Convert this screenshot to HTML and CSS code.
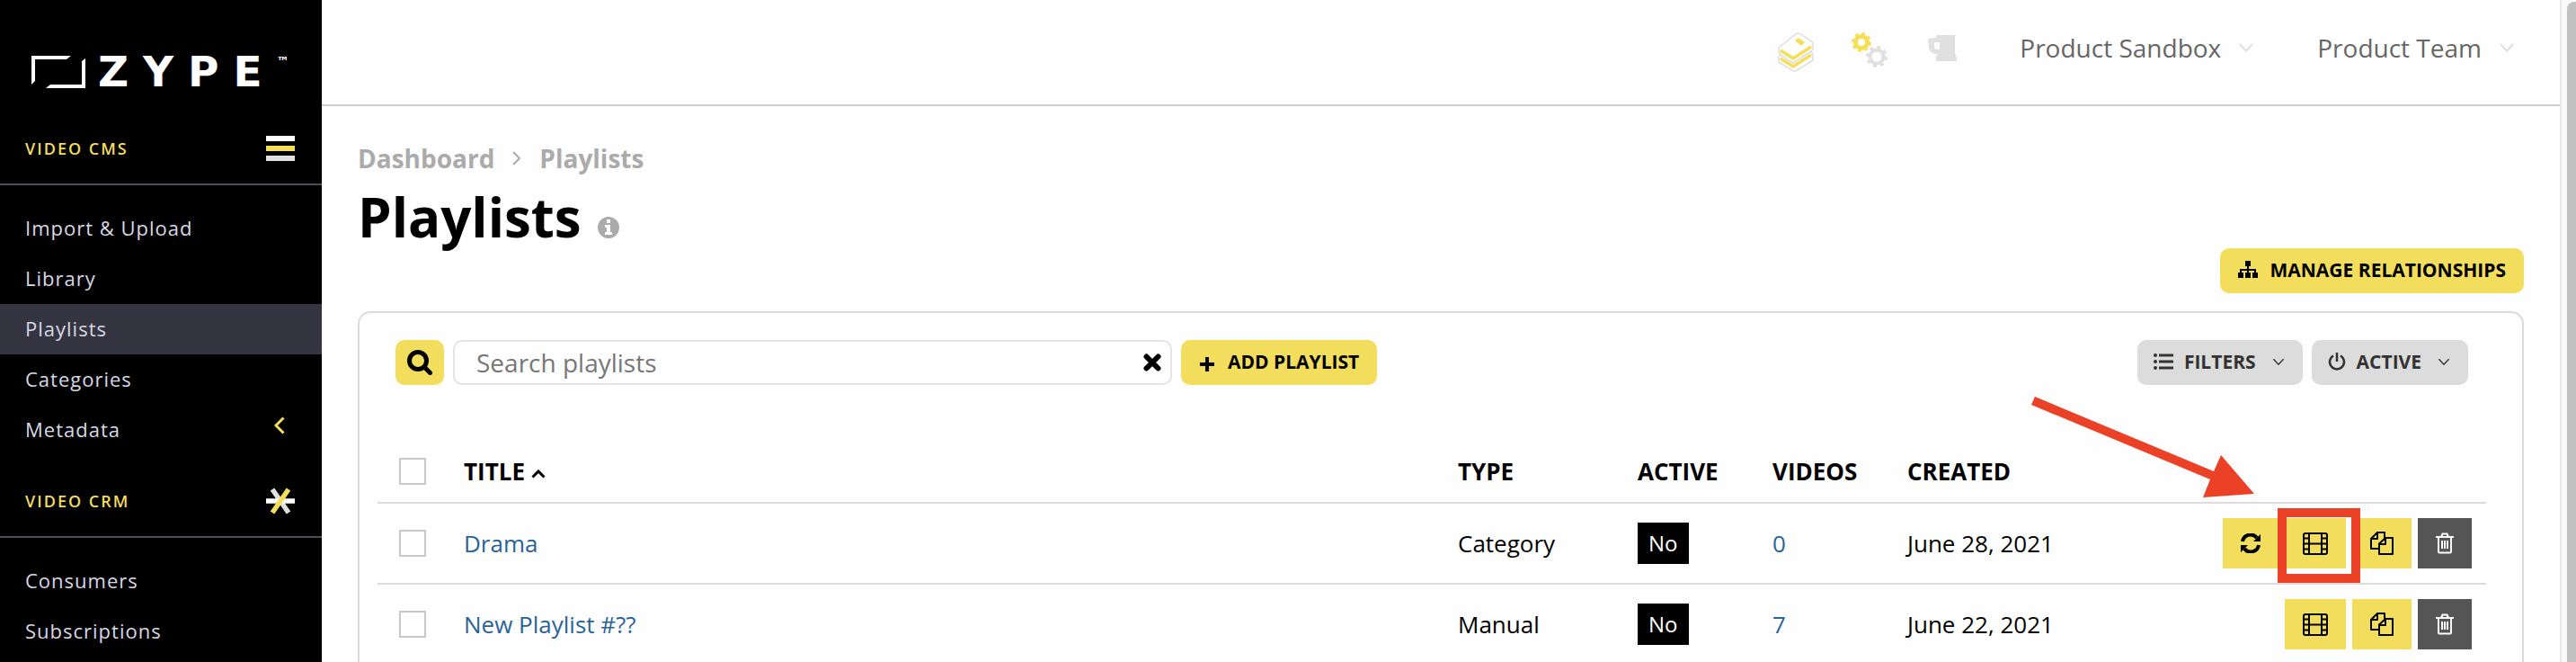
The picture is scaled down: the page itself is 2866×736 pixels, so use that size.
FILE: index.html
```html
<!DOCTYPE html>
<html lang="en">
<head>
    <meta charset="UTF-8">
    <meta name="viewport" content="width=device-width, initial-scale=1.0">
    <title>Playlists</title>
    <link rel="stylesheet" href="styles.css">
</head>
<body>
    <!-- Shared icons -->
    <svg class="sprite" aria-hidden="true">
        <symbol id="icon-down" viewBox="0 0 20 12"><path d="M2 1.500l8 8.500 8-8.500" fill="none" stroke="currentColor" stroke-width="2"/></symbol>
        <symbol id="icon-film" viewBox="0 0 28 26">
            <g fill="none" stroke="currentColor" stroke-width="2">
                <rect x="1" y="2" width="26" height="23" rx="2"/>
                <path d="M7 2v23M21 2v23M7 13.500h14M1 7.500h6M1 13.500h6M1 19.500h6M21 7.500h6M21 13.500h6M21 19.500h6"/>
            </g>
        </symbol>
        <symbol id="icon-copy" viewBox="0 0 26 26">
            <g fill="none" stroke="currentColor" stroke-width="2" stroke-linejoin="round">
                <path d="M10 19H1V8l7-7h8v6M8 1v7H1"/>
                <path d="M17 7h8v18H10V13.500zM17 7v7h-7"/>
            </g>
        </symbol>
        <symbol id="icon-trash" viewBox="0 0 20 24">
            <g fill="none" stroke="currentColor" stroke-width="2">
                <path d="M0 5h20M6 5l1.500-3.500h5L14 5M3 5v16q0 1.500 1.500 1.500h11q1.500 0 1.500-1.500V5M7 9v9M10 9v9M13 9v9"/>
            </g>
        </symbol>
    </svg>

    <div class="app">
        <nav class="sidebar">
            <a class="logo" href="#">
                <svg width="60" height="38" viewBox="0 0 60 38" fill="#fff">
                    <path d="M0 1h44l-5 4H4v24l-4 4z"/>
                    <path d="M60 4v33H16l5-4h35V7z"/>
                </svg>
                <span class="wordmark">ZYPE</span>
                <span class="tm">™</span>
            </a>
            <div class="section">
                <span>Video CMS</span>
                <svg width="32" height="28" viewBox="0 0 32 28"><path fill="#fff" d="M0 0h32v6H0z"/><path fill="#f3dd5d" d="M0 11h32v6H0z"/><path fill="#e0e0e0" d="M0 22h32v6H0z"/></svg>
            </div>
            <ul class="menu">
                <li><a href="#">Import &amp; Upload</a></li>
                <li><a href="#">Library</a></li>
                <li><a href="#" class="current">Playlists</a></li>
                <li><a href="#">Categories</a></li>
                <li><a href="#">Metadata <svg width="12" height="20" viewBox="0 0 12 20"><path d="M10.500 1.500L2 10l8.500 8.500" fill="none" stroke="#f3dd5d" stroke-width="3"/></svg></a></li>
            </ul>
            <div class="section">
                <span>Video CRM</span>
                <svg width="32" height="30" viewBox="0 0 32 30" stroke-width="5.500"><path stroke="#e0e0e0" d="M7 2l18 26"/><path stroke="#fff" d="M0 15h32"/><path stroke="#f3dd5d" d="M25 2L7 28"/></svg>
            </div>
            <ul class="menu">
                <li><a href="#">Consumers</a></li>
                <li><a href="#">Subscriptions</a></li>
            </ul>
        </nav>

        <div class="page">
            <header class="topbar">
                <div class="tools">
                    <a href="#" aria-label="Library">
                        <svg width="40" height="44" viewBox="0 0 40 44" fill="none">
                            <path d="M1 17L21 1h3l15 10v8l-2 2 2 3v7L20 43h-3L1 33v-6l2-2-2-3z" stroke="#dedede" stroke-width="1.500"/>
                            <path d="M3 25l14 9 20-13" stroke="#dedede" stroke-width="1.500"/>
                            <path d="M3 20l14 9 20-13M3 29l14 9 20-13" stroke="#f6de55" stroke-width="3.500"/>
                            <path d="M19 9l4-3 7 5-4 4z" fill="#f6de55"/>
                        </svg>
                    </a>
                    <a href="#" aria-label="Settings">
                        <svg width="43" height="40" viewBox="0 0 43 40" fill="none">
                            <g stroke="#f6de55"><circle cx="11" cy="11" r="6.500" stroke-width="5"/><circle cx="11" cy="11" r="9.500" stroke-width="3" stroke-dasharray="3.500 3.960"/></g>
                            <g stroke="#e0e0e0"><circle cx="28" cy="27" r="7.500" stroke-width="4"/><circle cx="28" cy="27" r="10.500" stroke-width="3" stroke-dasharray="4 4.250"/></g>
                        </svg>
                    </a>
                    <a href="#" aria-label="Blender">
                        <svg width="32" height="32" viewBox="0 -3 32 32" fill="#e0e0e0"><path fill-rule="evenodd" d="M9 0h22l-1 2v18l2 5v4H9v-4l2-4H9q-7-1-8-7L0 4q4-1 9-1zM7 8v6l2 2h4V8z"/></svg>
                    </a>
                </div>
                <button class="account">Product Sandbox <svg width="18" height="12"><use href="#icon-down"/></svg></button>
                <button class="account">Product Team <svg width="18" height="12"><use href="#icon-down"/></svg></button>
            </header>

            <main class="content">
                <div class="breadcrumb">
                    <a href="#">Dashboard</a>
                    <svg width="10" height="16" viewBox="0 0 10 16"><path d="M1 1l7 7-7 7" fill="none" stroke="#ababab" stroke-width="2"/></svg>
                    <a href="#">Playlists</a>
                </div>
                <div class="heading">
                    <h1>Playlists</h1>
                    <svg width="24" height="24" viewBox="0 0 24 24"><circle cx="12" cy="12" r="12" fill="#ababab"/><path fill="#fff" d="M10 3h4v4h-4zM8 9h6v8h2v3H8v-3h2v-5H8z"/></svg>
                </div>
                <div class="page-actions">
                    <button class="btn">
                        <svg width="22" height="20" viewBox="0 0 22 20"><path d="M8 0h6v6H8zM0 13h6v6H0zM8 13h6v6H8zM16 13h6v6h-6z"/><path d="M11 5v9M3 14v-4h16v4" fill="none" stroke="#000" stroke-width="2"/></svg>
                        Manage Relationships
                    </button>
                </div>

                <section class="panel">
                    <div class="toolbar">
                        <button class="btn search-btn" aria-label="Search">
                            <svg width="28" height="28" viewBox="0 0 28 28" fill="none" stroke="#000" stroke-width="5"><circle cx="12" cy="12" r="9.500"/><path d="M19 19l6.500 6.500" stroke-linecap="round"/></svg>
                        </button>
                        <div class="search-box">
                            <input type="text" placeholder="Search playlists" aria-label="Search playlists">
                            <button class="clear" aria-label="Clear">
                                <svg width="20" height="20" viewBox="0 0 20 20"><path d="M3.500 3.500l13 13M16.500 3.500l-13 13" stroke="#000" stroke-width="6" stroke-linecap="round"/></svg>
                            </button>
                        </div>
                        <button class="btn add-btn">
                            <svg width="18" height="18" viewBox="0 0 18 18"><path d="M9 1v16M1 9h16" stroke="#000" stroke-width="4"/></svg>
                            Add Playlist
                        </button>
                        <button class="btn grey push">
                            <svg width="22" height="18" viewBox="0 0 22 18" fill="none" stroke="#333"><path d="M6 2h16M6 9h16M6 16h16" stroke-width="3"/><path d="M2 2h.010M2 9h.010M2 16h.010" stroke-width="4" stroke-linecap="round"/></svg>
                            Filters
                            <svg class="caret" width="14" height="9"><use href="#icon-down"/></svg>
                        </button>
                        <button class="btn grey">
                            <svg width="20" height="20" viewBox="0 0 20 20" fill="none" stroke="#333" stroke-width="2.500"><path d="M6 3.500a8 8 0 1 0 8 0M10 0v10"/></svg>
                            Active
                            <svg class="caret" width="14" height="9"><use href="#icon-down"/></svg>
                        </button>
                    </div>

                    <table class="playlists">
                        <thead>
                            <tr>
                                <th class="col-check"><input type="checkbox" aria-label="Select all"></th>
                                <th>Title <svg width="16" height="10" viewBox="0 0 16 10"><path d="M1.500 8.500L8 2l6.500 6.500" fill="none" stroke="#000" stroke-width="3"/></svg></th>
                                <th class="col-type">Type</th>
                                <th class="col-active">Active</th>
                                <th class="col-videos">Videos</th>
                                <th class="col-created">Created</th>
                                <th class="col-actions"></th>
                            </tr>
                        </thead>
                        <tbody>
                            <tr>
                                <td class="col-check"><input type="checkbox" aria-label="Select Drama"></td>
                                <td><a href="#">Drama</a></td>
                                <td>Category</td>
                                <td><span class="badge">No</span></td>
                                <td><a href="#">0</a></td>
                                <td>June 28, 2021</td>
                                <td>
                                    <div class="actions">
                                        <button aria-label="Refresh">
                                            <svg width="22" height="22" viewBox="0 0 22 22" fill="none" stroke="#000" stroke-width="4"><path d="M2 9a9 9 0 0 1 16-4M20 13a9 9 0 0 1-16 4"/><path d="M22 1v8h-8zM0 21v-8h8z" fill="#000" stroke="none"/></svg>
                                        </button>
                                        <button class="marked" aria-label="Manage videos">
                                            <svg width="28" height="26"><use href="#icon-film"/></svg>
                                            <svg class="pointer" width="248" height="112" viewBox="0 0 248 112" fill="#eb4127"><path d="M4 0l199 83 8-18 37 43-57 4 8-20L0 9z"/></svg>
                                        </button>
                                        <button aria-label="Duplicate"><svg width="26" height="26"><use href="#icon-copy"/></svg></button>
                                        <button class="delete" aria-label="Delete"><svg width="20" height="24"><use href="#icon-trash"/></svg></button>
                                    </div>
                                </td>
                            </tr>
                            <tr>
                                <td class="col-check"><input type="checkbox" aria-label="Select New Playlist"></td>
                                <td><a href="#">New Playlist #??</a></td>
                                <td>Manual</td>
                                <td><span class="badge">No</span></td>
                                <td><a href="#">7</a></td>
                                <td>June 22, 2021</td>
                                <td>
                                    <div class="actions">
                                        <button aria-label="Manage videos"><svg width="28" height="26"><use href="#icon-film"/></svg></button>
                                        <button aria-label="Duplicate"><svg width="26" height="26"><use href="#icon-copy"/></svg></button>
                                        <button class="delete" aria-label="Delete"><svg width="20" height="24"><use href="#icon-trash"/></svg></button>
                                    </div>
                                </td>
                            </tr>
                        </tbody>
                    </table>
                </section>
            </main>
        </div>

        <div class="scrollbar"><div class="thumb"></div></div>
    </div>
</body>
</html>
```
FILE: styles.css
```css
* {
    box-sizing: border-box;
}
body {
    margin: 0;
    font-family: "Open Sans", "Noto Sans", sans-serif;
    font-size: 26px;
    color: #000;
    background-color: #fefefe;
    overflow: hidden;
}
a {
    color: #2a6496;
    text-decoration: none;
}
button {
    font-family: inherit;
    border: none;
    cursor: pointer;
}
svg {
    display: block;
    flex: none;
}
.sprite {
    position: absolute;
    width: 0;
    height: 0;
}
.app {
    display: flex;
    height: 100vh;
}

/* Sidebar */
.sidebar {
    flex: none;
    width: 358px;
    background-color: #000;
    overflow: hidden;
}
.logo {
    display: flex;
    padding: 61px 0 31px 35px;
    color: #fff;
    font-family: "DejaVu Sans", sans-serif;
    font-weight: 700;
}
.wordmark {
    margin-left: 14px;
    font-size: 47px;
    line-height: 38px;
    letter-spacing: 16px;
}
.tm {
    font-size: 14px;
    line-height: 14px;
}
.section {
    display: flex;
    align-items: center;
    justify-content: space-between;
    height: 76px;
    padding: 0 30px 4px 28px;
    border-bottom: 2px solid #4f4f5c;
    color: #f3dd5d;
    font-size: 18px;
    font-weight: 600;
    letter-spacing: 2px;
    text-transform: uppercase;
}
.menu {
    list-style: none;
    margin: 0;
    padding: 20px 0 16px;
}
.menu a {
    display: flex;
    align-items: center;
    justify-content: space-between;
    height: 56px;
    padding: 0 41px 2px 28px;
    color: #d8d8e5;
    font-size: 22px;
    letter-spacing: 1px;
}
.menu a svg {
    margin-bottom: 8px;
}
.menu .current {
    background-color: #353541;
}

/* Header */
.page {
    flex: 1;
    min-width: 0;
}
.topbar {
    display: flex;
    align-items: center;
    justify-content: flex-end;
    gap: 70px;
    height: 118px;
    padding: 0 50px 10px 0;
    border-bottom: 2px solid #cfcfcf;
}
.tools {
    display: flex;
    align-items: flex-start;
    gap: 42px;
    padding-top: 10px;
}
.account {
    display: flex;
    align-items: center;
    gap: 19px;
    padding: 0;
    background: none;
    color: #666;
    font-size: 28px;
}
.account svg {
    color: #ddd;
}
.content {
    padding: 36px 40px 0;
}
.breadcrumb {
    display: flex;
    align-items: center;
    gap: 20px;
    line-height: 44px;
    font-size: 28px;
    font-weight: 700;
}
.breadcrumb a {
    color: #ababab;
}
.heading {
    display: flex;
    align-items: center;
    gap: 18px;
    margin-top: 8px;
}
.heading svg {
    margin-top: 24px;
}
h1 {
    margin: 0;
    font-size: 60px;
    line-height: 70px;
}
.page-actions {
    display: flex;
    justify-content: flex-end;
    margin-bottom: 20px;
}
.btn {
    display: flex;
    align-items: center;
    gap: 14px;
    height: 50px;
    padding: 0 20px 2px;
    border-radius: 10px;
    background-color: #f3dd5d;
    color: #000;
    font-size: 21px;
    font-weight: 700;
    text-transform: uppercase;
    white-space: nowrap;
}
.btn.grey {
    gap: 12px;
    padding: 0 18px 2px;
    background-color: #dcdcdc;
    color: #333;
}
.btn .caret {
    margin: 0 2px 0 6px;
}

/* Playlist panel */
.panel {
    padding: 30px 40px 0 20px;
    border: 2px solid #dcdcdc;
    border-bottom: none;
    border-radius: 14px 14px 0 0;
}
.toolbar {
    display: flex;
    gap: 10px;
    padding: 0 20px;
}
.search-btn {
    padding: 0 13px;
}
.search-box {
    display: flex;
    flex: 0 1 800px;
    border: 2px solid #e4e4e4;
    border-radius: 10px;
}
.search-box input {
    flex: 1;
    padding: 0 24px;
    border: none;
    outline: none;
    background: none;
    font-family: inherit;
    font-size: 28px;
}
.search-box input::placeholder {
    color: #777;
}
.clear {
    padding: 0 10px;
    background: none;
}
.add-btn svg {
    margin-top: 6px;
}
.push {
    margin-left: auto;
}
.playlists {
    width: 100%;
    margin-top: 62px;
    border-spacing: 0;
    table-layout: fixed;
}
.playlists th,
.playlists td {
    padding: 0;
    border-bottom: 2px solid #dcdcdc;
    text-align: left;
}
.playlists th {
    height: 70px;
    text-transform: uppercase;
}
.playlists th svg {
    display: inline-block;
    vertical-align: middle;
}
.playlists td {
    height: 90px;
}
.playlists .col-check {
    width: 96px;
    padding-left: 24px;
}
.col-type {
    width: 200px;
}
.col-active,
.col-videos {
    width: 150px;
}
.col-created {
    width: 300px;
}
.col-actions {
    width: 344px;
}
.playlists input {
    display: block;
    appearance: none;
    width: 30px;
    height: 30px;
    margin: 0;
    border: 2px solid #c8c8c8;
    background-color: #fff;
}
.badge {
    display: inline-block;
    padding: 0 12px;
    font-size: 24px;
    line-height: 46px;
    background-color: #000;
    color: #fff;
}
.actions {
    display: flex;
    justify-content: flex-end;
    gap: 7px;
    padding-right: 16px;
}
.actions button {
    position: relative;
    height: 56px;
    padding: 0 20px;
    background-color: #f3dd5d;
}
.actions .delete {
    background-color: #555;
    color: #fff;
}

/* Red callout around the button, with its arrow */
.marked::after {
    content: "";
    position: absolute;
    z-index: 1;
    inset: -11px -16px -16px -8px;
    border: 10px solid #eb4127;
}
.pointer {
    position: absolute;
    right: 102px;
    bottom: 79px;
}

/* Scrollbar */
.scrollbar {
    flex: none;
    width: 18px;
    padding: 2px 0 0 6px;
    border-left: 2px solid #e8e8e8;
    background-color: #fafafa;
}
.thumb {
    height: 100%;
    border-radius: 8px 0 0;
    background-color: #c1c1c1;
}
```
